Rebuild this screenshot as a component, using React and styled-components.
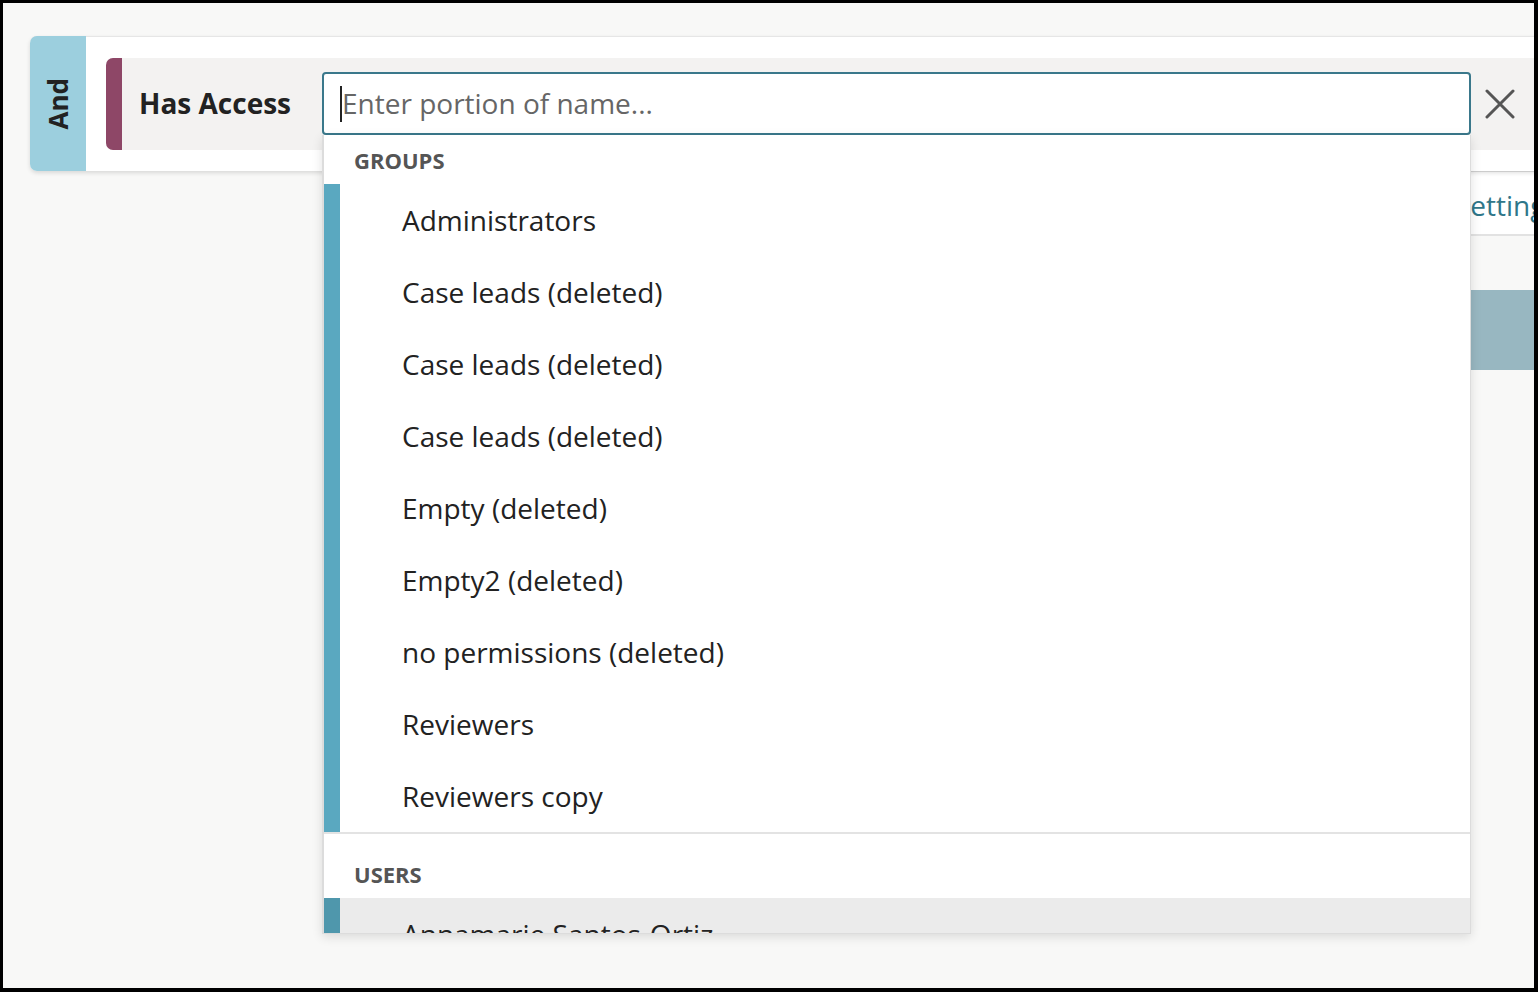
import React from "react";
import styled, { createGlobalStyle } from "styled-components";

const GlobalStyle = createGlobalStyle`
  html, body { margin: 0; padding: 0; background: #000; }
  body { font-family: "Open Sans", "Noto Sans", sans-serif; color: #222; }
  * { box-sizing: border-box; }
`;

const Frame = styled.div`
  width: 1538px;
  height: 992px;
  border-style: solid;
  border-color: #000;
  border-width: 3px 4px 4px 3px;
  background: #f8f8f7;
  overflow: hidden;
  position: relative;
`;

const Page = styled.div`
  padding: 33px 0 0 27px;
  width: 1700px;
`;

const Card = styled.div`
  display: flex;
  height: 135px;
  width: 1600px;
  background: #fff;
  border-top: 1px solid #e6e6e6;
  border-radius: 7px 0 0 7px;
  box-shadow: 0 2px 4px rgba(0, 0, 0, 0.13);
  position: relative;
  z-index: 2;
`;

const OpTab = styled.div`
  flex: 0 0 56px;
  background: #9ccfde;
  border-radius: 7px 0 0 7px;
  margin-top: -1px;
  display: flex;
  align-items: center;
  justify-content: center;
`;

const OpText = styled.span`
  writing-mode: vertical-rl;
  transform: rotate(180deg);
  font-size: 26px;
  font-weight: 700;
  color: #222;
  line-height: 1;
`;

const CardBody = styled.div`
  flex: 1;
  padding: 21px 0 21px 20px;
`;

const Condition = styled.div`
  display: flex;
  align-items: center;
  height: 92px;
  background: #f3f2f1;
  border-radius: 7px 0 0 7px;
`;

const Marker = styled.div`
  align-self: stretch;
  flex: 0 0 16px;
  background: #8e4767;
  border-radius: 7px 0 0 7px;
`;

const Label = styled.div`
  flex: 0 0 200px;
  padding: 0 0 2px 17px;
  font-size: 28px;
  font-weight: 700;
  color: #222;
  white-space: nowrap;
`;

const Field = styled.div`
  position: relative;
  flex: 0 0 1149px;
  height: 63px;
  margin-top: -1px;
`;

const Input = styled.input`
  width: 100%;
  height: 100%;
  border: 2px solid #3a788b;
  border-radius: 4px;
  padding: 0 0 2px 18px;
  font-family: "Open Sans", sans-serif;
  font-size: 28px;
  color: #222;
  background: #fff;
  outline: none;
  &::placeholder { color: #666; }
`;

const Caret = styled.span`
  position: absolute;
  left: 18px;
  top: 14px;
  width: 2px;
  height: 36px;
  background: #222;
`;

const CloseButton = styled.button`
  margin-left: 14px;
  width: 30px;
  height: 30px;
  padding: 0;
  border: none;
  background: transparent;
  display: flex;
  align-items: center;
  justify-content: center;
  cursor: pointer;
`;

const Dropdown = styled.div`
  position: absolute;
  top: 100%;
  left: 0;
  width: 100%;
  height: 799px;
  overflow: hidden;
  background: #fff;
  border: 1px solid #dcdcdc;
  border-left-width: 2px;
  border-top: none;
  box-shadow: 0 3px 10px rgba(0, 0, 0, 0.12);
  z-index: 20;
`;

const SectionHeader = styled.div`
  padding: ${(p) => (p.$first ? "12px 0 10px 30px" : "27px 0 10px 30px")};
  font-size: 22px;
  line-height: 27px;
  font-weight: 700;
  color: #555;
`;

const Option = styled.div`
  display: flex;
  align-items: center;
  height: 72px;
  padding-left: 62px;
  border-left: 16px solid ${(p) => (p.$active ? "#4f97ac" : "#5aa8c0")};
  background: ${(p) => (p.$active ? "#ebebeb" : "#fff")};
  font-size: 28px;
  color: #222;
  white-space: nowrap;
`;

const Divider = styled.div`
  height: 2px;
  background: #e3e3e3;
`;

const TabsBar = styled.div`
  display: flex;
  align-items: center;
  height: 65px;
  width: 1400px;
  margin-left: 300px;
  background: #fff;
  border-top: 1px solid #e2e2e2;
  border-bottom: 2px solid #e2e2e2;
  padding-left: 1125px;
`;

const TabLink = styled.span`
  font-size: 28px;
  color: #2f7689;
  white-space: nowrap;
  padding-top: 3px;
`;

const Block = styled.div`
  margin: 54px 0 0 400px;
  height: 80px;
  width: 1300px;
  background: #98b7c1;
`;

const groups = [
  "Administrators",
  "Case leads (deleted)",
  "Case leads (deleted)",
  "Case leads (deleted)",
  "Empty (deleted)",
  "Empty2 (deleted)",
  "no permissions (deleted)",
  "Reviewers",
  "Reviewers copy",
];

const users = ["Annamarie Santos-Ortiz", "Bob Example", "Carla Jones"];

export default function App() {
  return (
    <>
      <GlobalStyle />
      <Frame>
        <Page>
          <Card>
            <OpTab>
              <OpText>And</OpText>
            </OpTab>
            <CardBody>
              <Condition>
                <Marker />
                <Label>Has Access</Label>
                <Field>
                  <Input placeholder="Enter portion of name..." readOnly />
                  <Caret />
                  <Dropdown>
                    <SectionHeader $first>GROUPS</SectionHeader>
                    {groups.map((g, i) => (
                      <Option key={i}>{g}</Option>
                    ))}
                    <Divider />
                    <SectionHeader>USERS</SectionHeader>
                    {users.map((u, i) => (
                      <Option key={u} $active={i === 0}>
                        {u}
                      </Option>
                    ))}
                  </Dropdown>
                </Field>
                <CloseButton aria-label="Remove">
                  <svg width="30" height="30" viewBox="0 0 30 30">
                    <path
                      d="M2 2 L28 28 M28 2 L2 28"
                      stroke="#555"
                      strokeWidth="3"
                      strokeLinecap="round"
                      fill="none"
                    />
                  </svg>
                </CloseButton>
              </Condition>
            </CardBody>
          </Card>
          <TabsBar>
            <TabLink>Settings</TabLink>
          </TabsBar>
          <Block />
        </Page>
      </Frame>
    </>
  );
}
